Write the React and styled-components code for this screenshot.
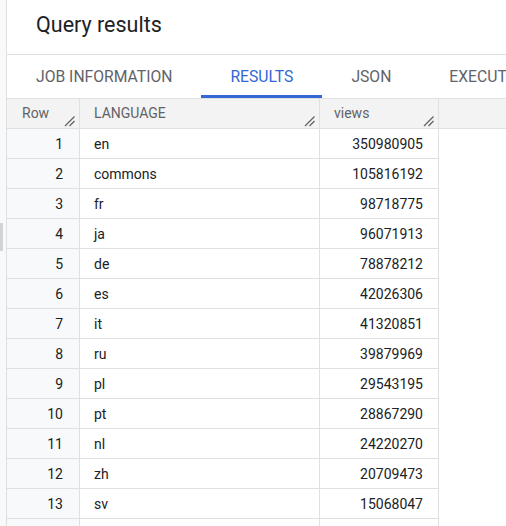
import React from 'react';
import styled, { createGlobalStyle } from 'styled-components';

const GlobalStyle = createGlobalStyle`
  html, body {
    margin: 0;
    height: 526px;
    overflow: hidden;
    background: #fff;
    font-family: Roboto, "Liberation Sans", Arial, sans-serif;
  }
`;

const Page = styled.div`
  display: flex;
  height: 526px;
`;

const Rail = styled.div`
  width: 6px;
  flex-shrink: 0;
  background: #f8f9fa;
  border-right: 1px solid #e0e0e0;
  display: flex;
  flex-direction: column;
`;

const Grip = styled.div`
  margin-top: 223px;
  width: 3px;
  height: 28px;
  background: #d3d3d3;
`;

const Main = styled.div`
  flex: 1;
  min-width: 0;
  overflow: hidden;
  display: flex;
  flex-direction: column;
`;

const Title = styled.h1`
  margin: 0;
  height: 55px;
  box-sizing: border-box;
  padding: 0 0 6px 29px;
  display: flex;
  align-items: center;
  font-size: 21.5px;
  font-weight: 400;
  color: #202124;
  border-bottom: 1px solid #e0e0e0;
  flex-shrink: 0;
`;

const TabBar = styled.nav`
  display: flex;
  height: 44px;
  box-sizing: border-box;
  border-bottom: 1px solid #e0e0e0;
  flex-shrink: 0;
  white-space: nowrap;
`;

const Tab = styled.div`
  display: flex;
  align-items: center;
  padding: 3px 29px 0;
  font-size: 15.7px;
  font-weight: 400;
  color: ${(p) => (p.$active ? '#3367d6' : '#5f6368')};
  border-bottom: 3px solid ${(p) => (p.$active ? '#3367d6' : 'transparent')};
  flex-shrink: 0;
`;

const HeaderRow = styled.div`
  display: flex;
  height: 30px;
  box-sizing: border-box;
  background: #f3f3f3;
  border-bottom: 1px solid #e0e0e0;
  flex-shrink: 0;
`;

const HeadCell = styled.div`
  width: ${(p) => p.$width}px;
  box-sizing: border-box;
  border-right: 1px solid #e0e0e0;
  display: flex;
  justify-content: space-between;
  padding: 0 3px 0 ${(p) => p.$pad}px;
  font-size: 14px;
  color: #5f6368;
`;

const HeadLabel = styled.span`
  align-self: center;
  padding-bottom: 2px;
`;

const Filler = styled.div`
  flex: 1;
`;

const ResizeIcon = styled.svg`
  align-self: flex-end;
  margin-bottom: 1px;
`;

const Row = styled.div`
  display: flex;
  height: 30px;
  width: 432px;
  box-sizing: border-box;
  border-bottom: 1px solid #e0e0e0;
  flex-shrink: 0;
`;

const Cell = styled.div`
  width: ${(p) => p.$width}px;
  box-sizing: border-box;
  border-right: 1px solid #e0e0e0;
  display: flex;
  align-items: center;
  justify-content: ${(p) => (p.$right ? 'flex-end' : 'flex-start')};
  padding: 0 ${(p) => (p.$right ? p.$pad : 0)}px 0 ${(p) => (p.$right ? 0 : p.$pad)}px;
  background: ${(p) => (p.$shade ? '#f8f9fa' : '#fff')};
  font-size: 14px;
  color: #202124;
`;

const Resize = () => (
  <ResizeIcon width="12" height="13" viewBox="0 0 12 13">
    <path d="M1 12 L10.5 2.5 M5.5 12 L10.5 7" stroke="#5f6368" strokeWidth="1.3" fill="none" />
  </ResizeIcon>
);

const columns = [
  { label: 'Row', width: 73, pad: 15 },
  { label: 'LANGUAGE', width: 240, pad: 14 },
  { label: 'views', width: 119, pad: 14 },
];

const rows = [
  ['en', '350980905'],
  ['commons', '105816192'],
  ['fr', '98718775'],
  ['ja', '96071913'],
  ['de', '78878212'],
  ['es', '42026306'],
  ['it', '41320851'],
  ['ru', '39879969'],
  ['pl', '29543195'],
  ['pt', '28867290'],
  ['nl', '24220270'],
  ['zh', '20709473'],
  ['sv', '15068047'],
  ['ko', '10100174'],
];

const tabs = ['JOB INFORMATION', 'RESULTS', 'JSON', 'EXECUTION DETAILS'];

const App = () => {
  return (
    <Page>
      <GlobalStyle />
      <Rail>
        <Grip />
      </Rail>
      <Main>
        <Title>Query results</Title>
        <TabBar>
          {tabs.map((t) => (
            <Tab key={t} $active={t === 'RESULTS'}>
              {t}
            </Tab>
          ))}
        </TabBar>
        <HeaderRow>
          {columns.map((c) => (
            <HeadCell key={c.label} $width={c.width} $pad={c.pad}>
              <HeadLabel>{c.label}</HeadLabel>
              <Resize />
            </HeadCell>
          ))}
          <Filler />
        </HeaderRow>
        {rows.map(([lang, views], i) => (
          <Row key={lang}>
            <Cell $width={73} $pad={16} $right $shade>
              {i + 1}
            </Cell>
            <Cell $width={240} $pad={14}>
              {lang}
            </Cell>
            <Cell $width={119} $pad={15} $right>
              {views}
            </Cell>
          </Row>
        ))}
      </Main>
    </Page>
  );
};

export default App;
